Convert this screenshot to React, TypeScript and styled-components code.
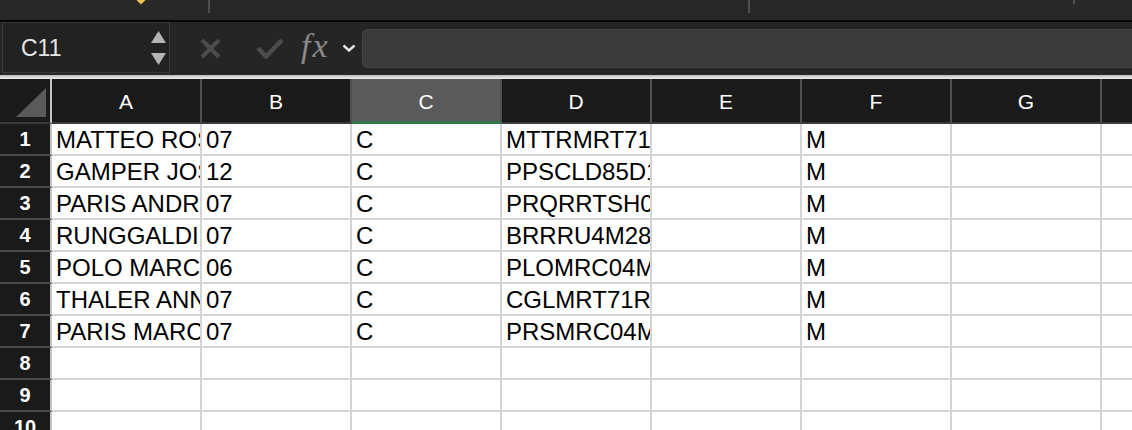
import React from "react"
import styled, { createGlobalStyle } from "styled-components"

const GlobalStyle = createGlobalStyle`
  html, body {
    margin: 0;
    padding: 0;
    height: 100%;
    overflow: hidden;
    background: #1a1a1a;
  }
  body {
    font-family: "Liberation Sans", Arial, Helvetica, sans-serif;
  }
`

const columns = ["A", "B", "C", "D", "E", "F", "G", "H"]
const selectedColumn = "C"

// cells are clipped at their right edge, as the sheet shows them
const rows = [
  ["MATTEO ROS", "07", "C", "MTTRMRT71A", "", "M"],
  ["GAMPER JOS", "12", "C", "PPSCLD85D1", "", "M"],
  ["PARIS ANDRE", "07", "C", "PRQRRTSH0C", "", "M"],
  ["RUNGGALDIE", "07", "C", "BRRRU4M28A", "", "M"],
  ["POLO MARCO", "06", "C", "PLOMRC04M1", "", "M"],
  ["THALER ANNA", "07", "C", "CGLMRT71R2", "", "M"],
  ["PARIS MARCO", "07", "C", "PRSMRC04M1", "", "M"],
]
const rowCount = 10

const ribbonSegments = [
  { width: 208, tick: 0 },
  { width: 540, tick: 13 },
  { width: 325, tick: 13 },
  { width: 200, tick: 4 },
]

export default function App() {
  return (
    <>
      <GlobalStyle />
      <Window>
        <RibbonStrip>
          {ribbonSegments.map(({ width, tick }, i) => (
            <RibbonSegment key={i} $width={width} $tick={tick}>
              {i === 0 && (
                <svg width="10" height="5" viewBox="0 0 10 5">
                  <path d="M0.5 0 L5 4.5 L9.5 0 Z" fill="#f2c14e" />
                </svg>
              )}
            </RibbonSegment>
          ))}
        </RibbonStrip>

        <FormulaBar>
          <NameBox>
            <span>C11</span>
            <Spinner>
              <svg width="15" height="12" viewBox="0 0 15 12">
                <path d="M7.5 0 L15 12 L0 12 Z" fill="#b4b4b4" />
              </svg>
              <svg width="15" height="12" viewBox="0 0 15 12">
                <path d="M0 0 L15 0 L7.5 12 Z" fill="#b4b4b4" />
              </svg>
            </Spinner>
          </NameBox>

          <BarIcon $gap={30}>
            <svg width="21" height="21" viewBox="0 0 21 21">
              <path d="M2 2 L19 19 M19 2 L2 19" stroke="#4c4c4c" strokeWidth="4" />
            </svg>
          </BarIcon>
          <BarIcon $gap={35}>
            <svg width="28" height="21" viewBox="0 0 28 21">
              <path d="M2 10 L10 18.5 L26 2" stroke="#4c4c4c" strokeWidth="4.4" fill="none" />
            </svg>
          </BarIcon>
          <FxLabel>fx</FxLabel>
          <BarIcon $gap={9}>
            <svg width="14" height="8" viewBox="0 0 14 8">
              <path d="M1.5 1.5 L7 6.5 L12.5 1.5" stroke="#e4e4e4" strokeWidth="2.4" fill="none" />
            </svg>
          </BarIcon>
          <FormulaInput />
        </FormulaBar>

        <Separator />

        <Sheet>
          <HeaderRow>
            <Corner>
              <svg width="50" height="43" viewBox="0 0 50 43">
                <path d="M16 38 L46 9 L46 38 Z" fill="#5a5a5a" />
              </svg>
            </Corner>
            {columns.map((c) => (
              <ColumnHeader key={c} $selected={c === selectedColumn}>
                {c}
              </ColumnHeader>
            ))}
          </HeaderRow>

          {Array.from({ length: rowCount }, (_, r) => (
            <Row key={r}>
              <RowHeader>{r + 1}</RowHeader>
              {columns.map((c, ci) => (
                <Cell key={c}>{rows[r]?.[ci] ?? ""}</Cell>
              ))}
            </Row>
          ))}
        </Sheet>
      </Window>
    </>
  )
}

const Window = styled.div`
  width: 1132px;
  height: 430px;
  overflow: hidden;
  display: flex;
  flex-direction: column;
`

const RibbonStrip = styled.div`
  display: flex;
  height: 20px;
  flex-shrink: 0;
  background: #282828;
  border-bottom: 2px solid #070707;
`

const RibbonSegment = styled.div<{ $width: number; $tick: number }>`
  position: relative;
  width: ${(p) => p.$width}px;
  flex-shrink: 0;
  padding-left: 136px;
  box-sizing: border-box;
  &:not(:first-child) {
    padding-left: 0;
  }
  svg {
    display: block;
  }
  &::before {
    content: "";
    position: absolute;
    left: 0;
    top: 0;
    width: 2px;
    height: ${(p) => p.$tick}px;
    background: #4e4e4e;
  }
`

const FormulaBar = styled.div`
  display: flex;
  align-items: center;
  height: 52px;
  flex-shrink: 0;
  background: #252525;
`

const NameBox = styled.div`
  align-self: flex-start;
  margin-left: 2px;
  width: 168px;
  height: 51px;
  box-sizing: border-box;
  border: 1px solid #3a3a3a;
  background: #222222;
  display: flex;
  align-items: center;
  justify-content: space-between;
  padding: 0 3px 0 18px;
  color: #e6e6e6;
  font-size: 23px;
  span {
    margin-top: 1px;
  }
`

const Spinner = styled.div`
  display: flex;
  flex-direction: column;
  gap: 10px;
  svg {
    display: block;
  }
`

const BarIcon = styled.div<{ $gap: number }>`
  margin-left: ${(p) => p.$gap}px;
  display: flex;
  align-items: center;
  svg {
    display: block;
  }
`

const FxLabel = styled.div`
  margin-left: 17px;
  width: 32px;
  font-family: "Liberation Serif", "Times New Roman", serif;
  font-style: italic;
  font-size: 34px;
  letter-spacing: 2px;
  color: #8a8a8a;
  line-height: 1;
  margin-top: -4px;
`

const FormulaInput = styled.div`
  flex: 1;
  margin-left: 6px;
  height: 39px;
  box-sizing: border-box;
  background: #3a3a3a;
  border: 1px solid #464646;
  border-right: none;
  border-radius: 6px 0 0 6px;
`

const Separator = styled.div`
  height: 5px;
  flex-shrink: 0;
  background: linear-gradient(#2a2a2a 0, #2a2a2a 1px, #b8b8b8 1px, #d8d8d8 3px, #ececec 5px);
`

const Sheet = styled.div`
  display: flex;
  flex-direction: column;
  background: #ffffff;
`

const HeaderRow = styled.div`
  display: flex;
  height: 45px;
  flex-shrink: 0;
  background: #1a1a1a;
`

const Corner = styled.div`
  width: 52px;
  flex-shrink: 0;
  box-sizing: border-box;
  border-right: 2px solid #c4c4c4;
  border-bottom: 2px solid #3a3a3a;
  svg {
    display: block;
  }
`

const ColumnHeader = styled.div<{ $selected?: boolean }>`
  width: 150px;
  flex-shrink: 0;
  box-sizing: border-box;
  border-right: 2px solid #4f4f4f;
  border-bottom: 2px solid ${(p) => (p.$selected ? "#2f7a4b" : "#3a3a3a")};
  box-shadow: ${(p) => (p.$selected ? "inset 0 -1px 0 #2f7a4b" : "none")};
  background: ${(p) => (p.$selected ? "#5a5a5a" : "#1a1a1a")};
  color: #ffffff;
  font-size: 21px;
  text-align: center;
  line-height: 46px;
`

const Row = styled.div`
  display: flex;
  height: 32px;
  flex-shrink: 0;
`

const RowHeader = styled.div`
  width: 52px;
  flex-shrink: 0;
  box-sizing: border-box;
  background: #1a1a1a;
  border-right: 2px solid #c4c4c4;
  border-bottom: 2px solid #4a4a4a;
  color: #ffffff;
  font-weight: bold;
  font-size: 20px;
  text-align: center;
  line-height: 30px;
`

const Cell = styled.div`
  width: 150px;
  flex-shrink: 0;
  box-sizing: border-box;
  border-right: 2px solid #d4d4d4;
  border-bottom: 2px solid #d4d4d4;
  background: #ffffff;
  color: #000000;
  font-size: 24px;
  line-height: 32px;
  height: 32px;
  padding-left: 4px;
  white-space: nowrap;
  overflow: hidden;
`
